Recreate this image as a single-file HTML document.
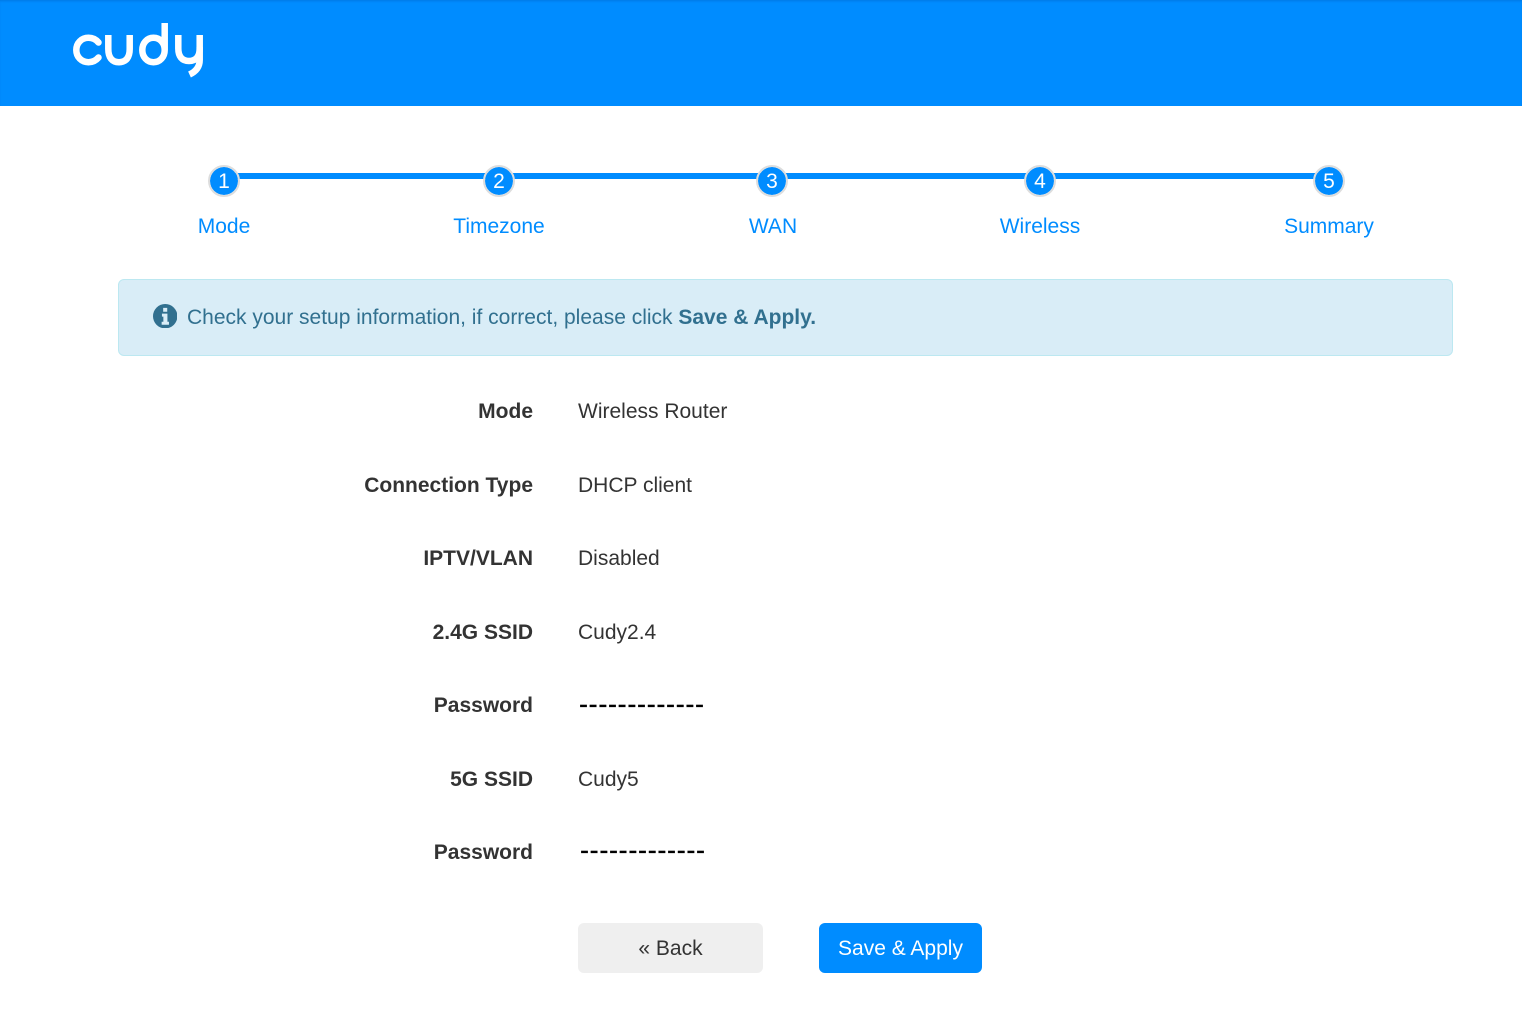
<!DOCTYPE html>
<html lang="en">
<head>
<meta charset="utf-8">
<title>Cudy Setup</title>
<style>
html,body{margin:0;padding:0;background:#fff;width:1522px;height:1032px;overflow:hidden}
body{position:relative;font-family:"Liberation Sans",Arial,sans-serif;font-size:21px;color:#333}
.hdr{position:absolute;left:0;top:0;width:1522px;height:106px;background:#008cff;box-shadow:inset 0 2px 2px -1px rgba(0,60,140,.25)}
.logo{position:absolute;left:60px;top:15px}
.line{position:absolute;left:224px;top:173px;width:1105px;height:6px;background:#008cff}
.c{position:absolute;top:165px;width:28px;height:28px;margin-left:-16px;border:2px solid #ddd;border-radius:50%;background:#008cff;color:#fff;text-align:center;line-height:30px;font-size:21px;background-clip:padding-box}
.sl{position:absolute;top:215px;width:200px;margin-left:-100px;text-align:center;color:#008cff;line-height:24px}
.alert{position:absolute;left:118px;top:279px;width:1333px;height:75px;background:#d9edf7;border:1px solid #bce8f1;border-radius:6px;color:#31708f}
.alert svg{position:absolute;left:33.700px;top:23.500px}
.alert span{position:absolute;left:68px;top:26px;line-height:24px;white-space:nowrap}
.k{position:absolute;right:989px;font-weight:bold;line-height:24px;white-space:nowrap}
.v{position:absolute;left:578px;line-height:24px;white-space:nowrap}
.d{position:absolute;font-size:27px;letter-spacing:.68px;color:#000;line-height:24px;white-space:nowrap;-webkit-text-stroke:.3px #000}
.btn{position:absolute;top:923px;height:50px;line-height:52px;text-align:center;border-radius:6px}
</style>
</head>
<body>
<div class="hdr">
<svg class="logo" width="155" height="70" viewBox="0 0 155 70" fill="none" stroke="#fff" stroke-width="6.500">
<path stroke-linecap="round" d="M38.500 27.500C36 24.500 32.500 22.800 28.500 22.800C21.500 22.800 16.300 28 16.300 35C16.300 42 21.500 47.200 28.500 47.200C32.500 47.200 36 45.500 38.500 42.500"/>
<path d="M48.300 20V34C48.300 42.500 52 47.200 59 47.200C66 47.200 69.700 42.500 69.700 34V20"/>
<path d="M104.700 8V35C104.700 42 100 47.200 93.500 47.200C87 47.200 82.300 42 82.300 35C82.300 28 87 22.800 93.500 22.800C100 22.800 104.700 28 104.700 35"/>
<path d="M118.300 20V33.500C118.300 41.500 122 46 129 46C136 46 139.700 41.500 139.700 33.500V20"/>
<path d="M139.700 32V45C139.700 52 136 56.500 129.500 59.500"/>
</svg>
</div>
<div class="line"></div>
<div class="c" style="left:224px">1</div>
<div class="c" style="left:499px">2</div>
<div class="c" style="left:772px">3</div>
<div class="c" style="left:1040px">4</div>
<div class="c" style="left:1329px">5</div>
<div class="sl" style="left:224px">Mode</div>
<div class="sl" style="left:499px">Timezone</div>
<div class="sl" style="left:773px">WAN</div>
<div class="sl" style="left:1040px">Wireless</div>
<div class="sl" style="left:1329px">Summary</div>
<div class="alert">
<svg width="24.400" height="24.400" viewBox="0 0 24 24"><circle cx="12" cy="12" r="12" fill="#31708f"/><path fill="#d9edf7" d="M10 3.800h4v3.800h-4zM8.800 9.500h5.400v8h1.500v2.900H8.500v-2.900h1.700v-5.100H8.800z"/></svg>
<span>Check your setup information, if correct, please click <b>Save &amp; Apply.</b></span>
</div>
<div class="k" style="top:400px">Mode</div><div class="v" style="top:400px">Wireless Router</div>
<div class="k" style="top:474px">Connection Type</div><div class="v" style="top:474px">DHCP client</div>
<div class="k" style="top:547px">IPTV/VLAN</div><div class="v" style="top:547px">Disabled</div>
<div class="k" style="top:621px">2.4G SSID</div><div class="v" style="top:621px">Cudy2.4</div>
<div class="k" style="top:694px">Password</div><div class="d" style="top:692px;left:579px">-------------</div>
<div class="k" style="top:768px">5G SSID</div><div class="v" style="top:768px">Cudy5</div>
<div class="k" style="top:841px">Password</div><div class="d" style="top:838px;left:580px">-------------</div>
<div class="btn" style="left:578px;width:185px;background:#efefef">« Back</div>
<div class="btn" style="left:819px;width:163px;background:#008cff;color:#fff">Save &amp; Apply</div>
</body>
</html>
